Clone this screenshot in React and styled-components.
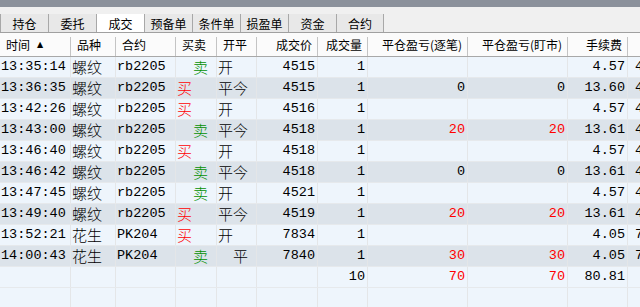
import React from 'react'
import styled, { createGlobalStyle, css } from 'styled-components'

const GlobalStyle = createGlobalStyle`
  html, body {
    margin: 0;
    padding: 0;
    background: #eef5fc;
  }
  * {
    box-sizing: border-box;
  }
`

const COLS = '71px 45px 60px 41px 40px 61px 50px 100px 100px 60px 160px'

const columns = [
  { key: 'time', title: '时间', align: 'left', sort: true },
  { key: 'name', title: '品种', align: 'left', cjk: true },
  { key: 'code', title: '合约', align: 'left' },
  { key: 'side', title: '买卖', align: 'left', cjk: true },
  { key: 'flag', title: '开平', align: 'left', cjk: true },
  { key: 'price', title: '成交价', align: 'right' },
  { key: 'qty', title: '成交量', align: 'right' },
  { key: 'pnl', title: '平仓盈亏(逐笔)', align: 'right' },
  { key: 'mtm', title: '平仓盈亏(盯市)', align: 'right' },
  { key: 'fee', title: '手续费', align: 'right' },
  { key: 'more', title: '', align: 'left' },
]

const trades = [
  ['13:35:14', '螺纹', 'rb2205', '卖', '开', '4515', '1', '', '', '4.57'],
  ['13:36:35', '螺纹', 'rb2205', '买', '平今', '4515', '1', '0', '0', '13.60'],
  ['13:42:26', '螺纹', 'rb2205', '买', '开', '4516', '1', '', '', '4.57'],
  ['13:43:00', '螺纹', 'rb2205', '卖', '平今', '4518', '1', '20', '20', '13.61'],
  ['13:46:40', '螺纹', 'rb2205', '买', '开', '4518', '1', '', '', '4.57'],
  ['13:46:42', '螺纹', 'rb2205', '卖', '平今', '4518', '1', '0', '0', '13.61'],
  ['13:47:45', '螺纹', 'rb2205', '卖', '开', '4521', '1', '', '', '4.57'],
  ['13:49:40', '螺纹', 'rb2205', '买', '平今', '4519', '1', '20', '20', '13.61'],
  ['13:52:21', '花生', 'PK204', '买', '开', '7834', '1', '', '', '4.05'],
  ['14:00:43', '花生', 'PK204', '卖', '  平', '7840', '1', '30', '30', '4.05'],
]

const tabs = ['持仓', '委托', '成交', '预备单', '条件单', '损盈单', '资金', '合约']

const Window = styled.div`
  width: 640px;
  height: 307px;
  overflow: hidden;
  display: flex;
  flex-direction: column;
  background: #eef5fc;
`

const TitleStrip = styled.div`
  height: 7px;
  flex-shrink: 0;
  background: #8b919b;
`

const TabBar = styled.div`
  display: flex;
  flex-shrink: 0;
  padding-top: 7px;
  background: #f0f0f0;
  border-bottom: 1px solid #a0a0a0;
`

const Tab = styled.div(
  ({ $active }) => css`
    width: 48px;
    height: 18px;
    display: flex;
    align-items: center;
    justify-content: center;
    border-left: 1px solid #a8a8a8;
    background: ${$active ? '#ffffff' : '#e8e8e8'};
    font-family: 'Noto Sans CJK SC', sans-serif;
    font-size: 12px;
    color: #000;

    &:last-child {
      border-right: 1px solid #a8a8a8;
    }
  `
)

const HeaderRow = styled.div`
  display: grid;
  grid-template-columns: ${COLS};
  height: 24px;
  flex-shrink: 0;
  background: #fbfbfb;
  border-bottom: 1px solid #a8a8a8;
`

const HeaderCell = styled.div(
  ({ $align }) => css`
    position: relative;
    display: flex;
    align-items: center;
    justify-content: ${$align === 'right' ? 'flex-end' : 'flex-start'};
    padding: 0 6px;
    font-family: 'Noto Sans CJK SC', sans-serif;
    font-size: 12px;
    color: #000;
    white-space: nowrap;

    &::after {
      content: '';
      position: absolute;
      right: 0;
      top: 4px;
      bottom: 0;
      width: 1px;
      background: #c4c4c4;
    }
  `
)

const SortMark = styled.span`
  margin-left: 7px;
  font-family: 'DejaVu Sans', sans-serif;
  font-size: 8px;
  line-height: 1;
`

const Body = styled.div`
  display: flex;
  flex-direction: column;
  flex: 1;
`

const Row = styled.div(
  ({ $alt, $fill }) => css`
    display: grid;
    grid-template-columns: ${COLS};
    height: 21px;
    flex-shrink: 0;
    background: ${$alt ? '#dce3ea' : '#eef5fc'};
    border-bottom: 1px solid #e6e9ec;
    ${$fill &&
    css`
      flex: 1;
      border-bottom: none;
    `}
  `
)

const Cell = styled.div(
  ({ $align, $cjk, $color, $indent, $clip }) => css`
    display: flex;
    align-items: center;
    justify-content: ${$align === 'right' ? 'flex-end' : 'flex-start'};
    min-width: 0;
    border-right: 1px solid #e4e6e8;
    padding: 0 ${$align === 'right' ? '2px' : '0'} 0 ${1 + ($indent || 0)}px;
    font-family: ${$cjk
      ? "'Noto Sans CJK SC', sans-serif"
      : "'Liberation Mono', 'Noto Sans CJK SC', monospace"};
    font-size: ${$cjk ? '15px' : '13.5px'};
    font-weight: ${$cjk ? 300 : 400};
    line-height: 16px;
    color: ${$color || '#000'};
    white-space: nowrap;
    ${$clip && 'overflow: hidden;'}
  `
)

const RED = '#ff0000'
const GREEN = '#009000'

const sideProps = (side) =>
  side === '卖' ? { $color: GREEN, $indent: 16 } : { $color: RED }

const TradeRow = ({ data, alt }) => {
  const [time, name, code, side, flag, price, qty, pnl, mtm, fee] = data
  const flagIndent = flag.startsWith(' ') ? 15 : 0
  const pnlColor = Number(pnl) > 0 ? RED : '#000'
  const mtmColor = Number(mtm) > 0 ? RED : '#000'
  return (
    <Row $alt={alt}>
      <Cell $align="left">{time}</Cell>
      <Cell $align="left" $cjk>
        {name}
      </Cell>
      <Cell $align="left">{code}</Cell>
      <Cell $align="left" $cjk {...sideProps(side)}>
        {side}
      </Cell>
      <Cell $align="left" $cjk $indent={flagIndent}>
        {flag.trim()}
      </Cell>
      <Cell $align="right">{price}</Cell>
      <Cell $align="right">{qty}</Cell>
      <Cell $align="right" $color={pnlColor}>
        {pnl}
      </Cell>
      <Cell $align="right" $color={mtmColor}>
        {mtm}
      </Cell>
      <Cell $align="right">{fee}</Cell>
      <Cell $align="left" $indent={6} $clip>
        {price}
      </Cell>
    </Row>
  )
}

const EmptyCells = ({ values = {} }) =>
  columns.map((col) => (
    <Cell key={col.key} $align={col.align} $color={values[col.key + 'Color']}>
      {values[col.key] || ''}
    </Cell>
  ))

const App = () => (
  <Window>
    <GlobalStyle />
    <TitleStrip />
    <TabBar>
      {tabs.map((t) => (
        <Tab key={t} $active={t === '成交'}>
          {t}
        </Tab>
      ))}
    </TabBar>
    <HeaderRow>
      {columns.map((col) => (
        <HeaderCell key={col.key} $align={col.align}>
          {col.title}
          {col.sort && <SortMark>▲</SortMark>}
        </HeaderCell>
      ))}
    </HeaderRow>
    <Body>
      {trades.map((t, i) => (
        <TradeRow key={t[0] + i} data={t} alt={i % 2 === 1} />
      ))}
      <Row>
        <EmptyCells
          values={{
            qty: '10',
            pnl: '70',
            pnlColor: RED,
            mtm: '70',
            mtmColor: RED,
            fee: '80.81',
          }}
        />
      </Row>
      <Row $fill>
        <EmptyCells />
      </Row>
    </Body>
  </Window>
)

export default App
